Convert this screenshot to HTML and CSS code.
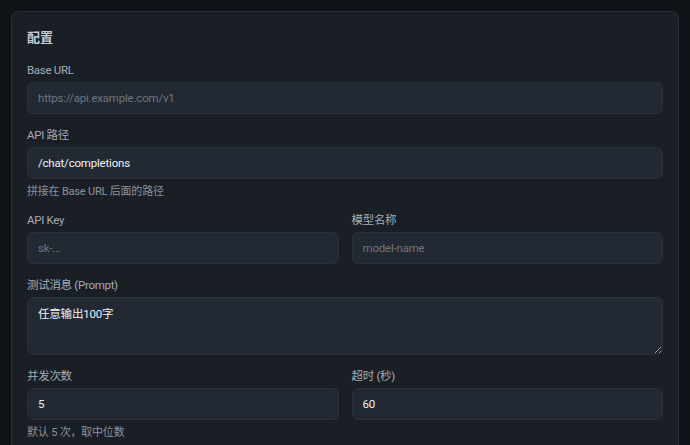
FILE: index.html
```html
<!DOCTYPE html>
<html lang="zh-CN">
<head>
  <meta charset="UTF-8">
  <meta name="viewport" content="width=device-width, initial-scale=1.0">
  <title>配置</title>
  <link rel="stylesheet" href="styles.css">
</head>
<body>
  <div class="card">
    <h2 class="card-title">配置</h2>

    <div class="field">
      <label class="label" for="base-url">Base URL</label>
      <input class="input" id="base-url" type="text" placeholder="https://api.example.com/v1">
    </div>

    <div class="field">
      <label class="label" for="api-path">API 路径</label>
      <input class="input" id="api-path" type="text" value="/chat/completions">
      <div class="hint">拼接在 Base URL 后面的路径</div>
    </div>

    <div class="row">
      <div class="field">
        <label class="label" for="api-key">API Key</label>
        <input class="input" id="api-key" type="text" placeholder="sk-...">
      </div>
      <div class="field">
        <label class="label" for="model">模型名称</label>
        <input class="input" id="model" type="text" placeholder="model-name">
      </div>
    </div>

    <div class="field">
      <label class="label" for="prompt">测试消息 (Prompt)</label>
      <textarea class="input textarea" id="prompt">任意输出100字</textarea>
    </div>

    <div class="row">
      <div class="field">
        <label class="label" for="count">并发次数</label>
        <input class="input" id="count" type="text" value="5">
        <div class="hint">默认 5 次，取中位数</div>
      </div>
      <div class="field">
        <label class="label" for="timeout">超时 (秒)</label>
        <input class="input" id="timeout" type="text" value="60">
      </div>
    </div>
  </div>
</body>
</html>
```

FILE: styles.css
```css
body {
  font-family: Roboto, "Noto Sans CJK SC", sans-serif;
  background: #0f1217;
  color: #c9d1d9;
  margin: 0;
  padding: 11px;
}
.card {
  background: #1a1e25;
  border: 1px solid #2b3139;
  border-radius: 7px;
  padding: 15px 15px 20px;
}
.card-title {
  margin: 0 0 12px;
  font-size: 13px;
  font-weight: bold;
  line-height: 22px;
  color: #c4ccd5;
}
.field {
  margin-bottom: 12px;
}
.label {
  display: block;
  font-size: 11.5px;
  letter-spacing: -0.3px;
  line-height: 18px;
  color: #a3adb8;
  margin-bottom: 3px;
}
.input {
  display: block;
  box-sizing: border-box;
  width: 100%;
  height: 32px;
  padding: 0 10px;
  background: #232932;
  border: 1px solid #2a3039;
  border-radius: 6px;
  color: #eef2f6;
  font-family: inherit;
  font-size: 11.5px;
  letter-spacing: -0.2px;
  outline: none;
}
.input::placeholder {
  color: #6c7580;
}
.textarea {
  height: 58px;
  padding: 6px 10px;
  line-height: 20px;
  resize: vertical;
}
.hint {
  margin-top: 5px;
  font-size: 11px;
  letter-spacing: -0.2px;
  line-height: 15px;
  color: #8b949e;
}
.row {
  display: grid;
  grid-template-columns: 1fr 1fr;
  gap: 13px;
}
```
